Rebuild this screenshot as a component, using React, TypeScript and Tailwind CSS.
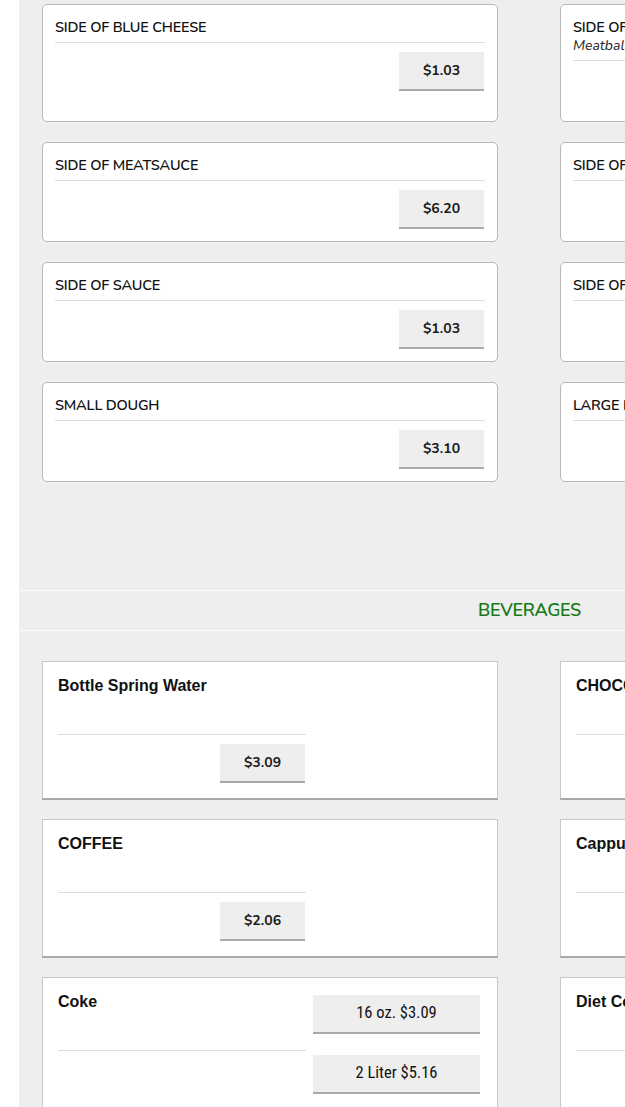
import React from "react";

type Side = { name: string; desc?: string; price: string };

const sideRows: [Side, Side][] = [
  [
    { name: "SIDE OF BLUE CHEESE", price: "$1.03" },
    { name: "SIDE OF MEATBALLS", desc: "Meatballs (3)", price: "$4.13" },
  ],
  [
    { name: "SIDE OF MEATSAUCE", price: "$6.20" },
    { name: "SIDE OF RANCH", price: "$1.03" },
  ],
  [
    { name: "SIDE OF SAUCE", price: "$1.03" },
    { name: "SIDE OF SAUSAGE", price: "$3.10" },
  ],
  [
    { name: "SMALL DOUGH", price: "$3.10" },
    { name: "LARGE DOUGH", price: "$5.16" },
  ],
];

type Bev = { name: string; price?: string; sizes?: string[] };

const bevs: Bev[] = [
  { name: "Bottle Spring Water", price: "$3.09" },
  { name: "CHOCOLATE MILK", price: "$2.06" },
  { name: "COFFEE", price: "$2.06" },
  { name: "Cappuccino", price: "$3.61" },
  { name: "Coke", sizes: ["16 oz. $3.09", "2 Liter $5.16"] },
  { name: "Diet Coke", sizes: ["16 oz. $3.09", "2 Liter $5.16"] },
];

const nunito = "font-['Nunito','Lato','Open_Sans',sans-serif]";

function SideCard({ item }: { item: Side }) {
  return (
    <div className="flex flex-col rounded-[5px] border border-[#b8b8b8] bg-white px-[12px] pt-[12px] pb-[12px]">
      <div className={`${nunito} border-b border-[#dcdcdc] pb-[5px]`}>
        <div className="text-[14.5px] font-semibold leading-[20px] text-[#111] tracking-[-0.2px]">
          {item.name}
        </div>
        {item.desc && (
          <div className="text-[14px] leading-[18px] italic text-[#222]">{item.desc}</div>
        )}
      </div>
      <div className="flex justify-end pt-[9px]">
        <button
          className={`${nunito} mr-[1px] h-[39px] w-[85px] border-b-[2px] border-[#a9a9a9] bg-[#eeeeee] text-[14px] font-bold text-[#1a1a1a]`}
        >
          {item.price}
        </button>
      </div>
    </div>
  );
}

function BevCard({ item }: { item: Bev }) {
  return (
    <div className="border border-[#c8c8c8] border-b-[2px] border-b-[#a8a8a8] bg-white px-[15px] pt-[15px] pb-[15px]">
      <div className="flex gap-[7px]">
        <div className="w-[248px] shrink-0">
          <div className="h-[57px] font-['Liberation_Sans',Arial,sans-serif] text-[16px] font-bold leading-[18px] text-[#111]">
            {item.name}
          </div>
          <div className="border-t border-[#dcdcdc]" />
          {item.price && (
            <div className="flex justify-end pt-[9px]">
              <button
                className={`${nunito} mr-[1px] h-[39px] w-[85px] border-b-[2px] border-[#a9a9a9] bg-[#eeeeee] text-[14px] font-bold text-[#1a1a1a]`}
              >
                {item.price}
              </button>
            </div>
          )}
        </div>
        {item.sizes && (
          <div className="flex w-[167px] flex-col gap-[21px] pt-[2px]">
            {item.sizes.map((s) => (
              <button
                key={s}
                className="h-[39px] w-[167px] border-b-[2px] border-[#a9a9a9] bg-[#eeeeee] font-['Liberation_Sans_Narrow','Roboto_Condensed',Arial,sans-serif] text-[16.5px] font-normal text-[#111]"
              >
                {s}
              </button>
            ))}
          </div>
        )}
      </div>
    </div>
  );
}

export default function App() {
  return (
    <div className="h-[1107px] w-[625px] overflow-hidden bg-white">
      <div className="ml-[19px] w-[1021px] bg-[#eeeeee] pt-[4px] pb-[40px]">
        <div className="grid grid-cols-2 gap-x-[62px] gap-y-[20px] pl-[23px] pr-[24px]">
          {sideRows.map(([a, b], i) => (
            <React.Fragment key={i}>
              <SideCard item={a} />
              <SideCard item={b} />
            </React.Fragment>
          ))}
        </div>
        <div className="mt-[108px] flex h-[41px] items-center justify-center border-y border-[#fbfbfb]">
          <span className={`${nunito} text-[18px] font-semibold text-[#167a16] tracking-[-0.3px]`}>
            BEVERAGES
          </span>
        </div>
        <div className="mt-[30px] grid grid-cols-2 gap-x-[62px] gap-y-[19px] pl-[23px] pr-[24px]">
          {bevs.map((b) => (
            <BevCard key={b.name} item={b} />
          ))}
        </div>
      </div>
    </div>
  );
}
